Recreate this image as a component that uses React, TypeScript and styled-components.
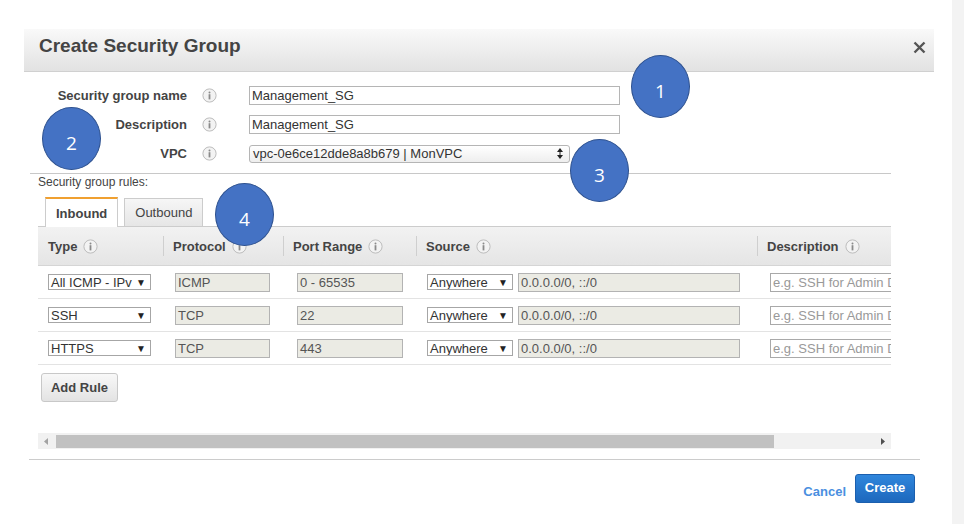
import styled, { createGlobalStyle } from "styled-components";

const GlobalStyle = createGlobalStyle`
  html, body {
    margin: 0;
    padding: 0;
    background: #ffffff;
  }
  body {
    font-family: "Liberation Sans", Arial, sans-serif;
    color: #444444;
  }
`;

const Page = styled.div`
  display: flex;
  width: 964px;
  height: 524px;
  overflow: hidden;
`;

const Stage = styled.div`
  position: relative;
  width: 952px;
  height: 524px;
`;

const SideStrip = styled.div`
  width: 12px;
  background: #f3f3f3;
`;

const Modal = styled.div`
  margin: 29px 0 0 24px;
  width: 910px;
  background: #ffffff;
`;

const Header = styled.div`
  display: flex;
  justify-content: space-between;
  align-items: flex-start;
  height: 43px;
  box-sizing: border-box;
  padding: 5px 8px 0 15px;
  background: linear-gradient(#f9f9f9, #e2e2e2);
  border-bottom: 1px solid #d0d0d0;
`;

const Title = styled.h1`
  margin: 0;
  font-size: 19px;
  line-height: 24px;
  font-weight: bold;
  color: #444444;
`;

const Close = styled.svg`
  margin-top: 7px;
`;

const Body = styled.div`
  padding: 0 43px 0 14px;
`;

const Form = styled.div`
  display: flex;
  flex-direction: column;
  gap: 10px;
  padding-top: 14px;
`;

const FormRow = styled.div`
  display: flex;
  align-items: center;
  height: 19px;
`;

const Label = styled.div`
  width: 149px;
  text-align: right;
  font-size: 13px;
  font-weight: bold;
  color: #444444;
`;

const FormIcon = styled.div`
  display: flex;
  margin-left: 15px;
  width: 15px;
`;

const TextInput = styled.div<{ $w: number }>`
  margin-left: 32px;
  width: ${(p) => p.$w}px;
  height: 19px;
  box-sizing: border-box;
  border: 1px solid #b5b5b5;
  padding: 0 2px;
  font-size: 13px;
  line-height: 17px;
  color: #333333;
  background: #ffffff;
`;

const VpcSelect = styled.div`
  margin-left: 32px;
  width: 321px;
  height: 18px;
  box-sizing: border-box;
  border: 1px solid #b5b5b5;
  border-radius: 3px;
  padding: 0 6px 0 3px;
  display: flex;
  align-items: center;
  justify-content: space-between;
  font-size: 13px;
  color: #333333;
  background: linear-gradient(#ffffff, #eeeeee);
`;

const Divider = styled.div`
  margin: 10px 0 0 -8px;
  height: 1px;
  background: #c8c8c8;
`;

const RulesLabel = styled.div`
  margin-top: 1px;
  font-size: 12px;
  line-height: 14px;
  color: #444444;
`;

const Tabs = styled.div`
  display: flex;
  align-items: flex-end;
  gap: 6px;
  margin-top: 8px;
  padding-left: 7px;
`;

const Tab = styled.div<{ $active?: boolean }>`
  box-sizing: border-box;
  height: ${(p) => (p.$active ? 30 : 28)}px;
  padding: 0 10px;
  display: flex;
  align-items: center;
  font-size: 13px;
  font-weight: ${(p) => (p.$active ? "bold" : "normal")};
  color: #444444;
  border: 1px solid #cccccc;
  border-bottom: none;
  border-top: ${(p) => (p.$active ? "2px solid #f0a030" : "1px solid #cccccc")};
  background: ${(p) =>
    p.$active ? "#ffffff" : "linear-gradient(#f6f6f6, #e6e6e6)"};
  margin-bottom: ${(p) => (p.$active ? "-1px" : "0")};
  position: relative;
`;

const Table = styled.div`
  width: 853px;
  overflow: hidden;
  border-top: 1px solid #cccccc;
`;

const Grid = styled.div`
  display: grid;
  grid-template-columns: 125px 120px 133px 341px 134px;
`;

const HeadRow = styled(Grid)`
  height: 38px;
  background: linear-gradient(#f2f2f2, #e5e5e5);
  border-bottom: 1px solid #d5d5d5;
`;

const HeadCell = styled.div<{ $sep?: boolean }>`
  position: relative;
  display: flex;
  align-items: center;
  gap: 6px;
  padding-left: 10px;
  font-size: 13px;
  font-weight: bold;
  color: #444444;
  white-space: nowrap;
  &::before {
    content: "";
    display: ${(p) => (p.$sep ? "block" : "none")};
    position: absolute;
    left: 0;
    top: 9px;
    width: 1px;
    height: 20px;
    background: #cfcfcf;
  }
`;

const BodyRow = styled(Grid)`
  height: 33px;
  box-sizing: border-box;
  border-bottom: 1px solid #e3e3e3;
`;

const Cell = styled.div<{ $pad: number }>`
  display: flex;
  align-items: center;
  gap: 5px;
  padding-left: ${(p) => p.$pad}px;
  white-space: nowrap;
`;

const DropDown = styled.div<{ $w: number }>`
  width: ${(p) => p.$w}px;
  height: 16px;
  box-sizing: border-box;
  border: 1px solid #a6a6a6;
  background: #ffffff;
  display: flex;
  align-items: center;
  justify-content: space-between;
  padding: 0 4px 0 2px;
  font-size: 13px;
  color: #333333;
  overflow: hidden;
`;

const Caret = styled.span`
  font-size: 10px;
  color: #222222;
  margin-left: 2px;
`;

const ReadOnly = styled.div<{ $w: number }>`
  width: ${(p) => p.$w}px;
  height: 19px;
  box-sizing: border-box;
  border: 1px solid #b3b3b3;
  background: #ebebe4;
  padding: 0 2px;
  font-size: 13px;
  line-height: 17px;
  color: #555555;
`;

const Placeholder = styled.div`
  flex-shrink: 0;
  width: 160px;
  height: 19px;
  box-sizing: border-box;
  border: 1px solid #a9a9a9;
  background: #ffffff;
  padding: 0 2px;
  font-size: 13px;
  line-height: 17px;
  color: #999999;
`;

const AddRule = styled.button`
  margin: 8px 0 0 3px;
  width: 77px;
  height: 29px;
  border: 1px solid #c8c8c8;
  border-radius: 3px;
  background: linear-gradient(#f8f8f8, #e3e3e3);
  font-family: "Liberation Sans", Arial, sans-serif;
  font-size: 13px;
  font-weight: bold;
  color: #444444;
  padding: 0;
`;

const ScrollTrack = styled.div`
  display: flex;
  align-items: center;
  margin-top: 31px;
  width: 853px;
  height: 16px;
  background: #f1f1f1;
`;

const ScrollArrow = styled.div`
  width: 16px;
  height: 16px;
  display: flex;
  align-items: center;
  justify-content: center;
`;

const ScrollThumb = styled.div`
  margin-left: 2px;
  height: 13px;
  background: #c1c1c1;
`;

const ScrollSpace = styled.div`
  flex: 1;
`;

const Footer = styled.div`
  margin: 10px 14px 0 5px;
  border-top: 1px solid #cccccc;
  display: flex;
  justify-content: flex-end;
  align-items: center;
  gap: 9px;
  padding: 14px 5px 0 0;
`;

const CancelLink = styled.span`
  padding-top: 5px;
  font-size: 13px;
  font-weight: bold;
  color: #4a8fe0;
`;

const CreateButton = styled.button`
  width: 60px;
  height: 29px;
  border: 1px solid #1b5fae;
  border-radius: 3px;
  background: linear-gradient(#2f86dc, #1d68bd);
  font-family: "Liberation Sans", Arial, sans-serif;
  font-size: 13px;
  font-weight: bold;
  color: #ffffff;
  padding: 0 0 3px;
`;

const Marker = styled.div`
  position: absolute;
  width: 59px;
  height: 63px;
  box-sizing: border-box;
  border-radius: 50%;
  border: 1.5px solid #2f528f;
  background: #4472c4;
  color: #ffffff;
  font-family: "Open Sans", "Noto Sans", sans-serif;
  font-size: 19px;
  display: flex;
  align-items: center;
  justify-content: center;
  padding-top: 8px;
`;

function InfoIcon() {
  return (
    <svg width="15" height="15" viewBox="0 0 15 15">
      <circle cx="7.5" cy="7.5" r="6.6" fill="#f3f3f3" stroke="#bcbcbc" strokeWidth="1" />
      <circle cx="7.5" cy="4.4" r="1" fill="#8a8a8a" />
      <rect x="6.6" y="6.2" width="1.8" height="5.2" fill="#8a8a8a" />
    </svg>
  );
}

function SortArrows() {
  return (
    <svg width="6" height="11" viewBox="0 0 6 11">
      <path d="M3 0 L6 4 L0 4 Z" fill="#222" />
      <path d="M3 11 L6 7 L0 7 Z" fill="#222" />
      <rect x="2.5" y="3" width="1" height="5" fill="#222" />
    </svg>
  );
}

const rules = [
  { type: "All ICMP - IPv", protocol: "ICMP", port: "0 - 65535" },
  { type: "SSH", protocol: "TCP", port: "22" },
  { type: "HTTPS", protocol: "TCP", port: "443" },
];

const markers = [
  { n: "1", x: 631, y: 55 },
  { n: "2", x: 42, y: 107 },
  { n: "3", x: 570, y: 139 },
  { n: "4", x: 215, y: 183 },
];

export default function App() {
  return (
    <>
      <GlobalStyle />
      <Page>
        <Stage>
          <Modal>
            <Header>
              <Title>Create Security Group</Title>
              <Close width="13" height="13" viewBox="0 0 13 13">
                <path d="M1.5 1.5 L11.5 11.5 M11.5 1.5 L1.5 11.5" stroke="#555" strokeWidth="2.4" />
              </Close>
            </Header>
            <Body>
              <Form>
                <FormRow>
                  <Label>Security group name</Label>
                  <FormIcon>
                    <InfoIcon />
                  </FormIcon>
                  <TextInput $w={371}>Management_SG</TextInput>
                </FormRow>
                <FormRow>
                  <Label>Description</Label>
                  <FormIcon>
                    <InfoIcon />
                  </FormIcon>
                  <TextInput $w={371}>Management_SG</TextInput>
                </FormRow>
                <FormRow>
                  <Label>VPC</Label>
                  <FormIcon>
                    <InfoIcon />
                  </FormIcon>
                  <VpcSelect>
                    <span>vpc-0e6ce12dde8a8b679 | MonVPC</span>
                    <SortArrows />
                  </VpcSelect>
                </FormRow>
              </Form>
              <Divider />
              <RulesLabel>Security group rules:</RulesLabel>
              <Tabs>
                <Tab $active>Inbound</Tab>
                <Tab>Outbound</Tab>
              </Tabs>
              <Table>
                <HeadRow>
                  <HeadCell>
                    Type <InfoIcon />
                  </HeadCell>
                  <HeadCell $sep>
                    Protocol <InfoIcon />
                  </HeadCell>
                  <HeadCell $sep>
                    Port Range <InfoIcon />
                  </HeadCell>
                  <HeadCell $sep>
                    Source <InfoIcon />
                  </HeadCell>
                  <HeadCell $sep>
                    Description <InfoIcon />
                  </HeadCell>
                </HeadRow>
                {rules.map((r) => (
                  <BodyRow key={r.type}>
                    <Cell $pad={10}>
                      <DropDown $w={103}>
                        <span>{r.type}</span>
                        <Caret>▼</Caret>
                      </DropDown>
                    </Cell>
                    <Cell $pad={12}>
                      <ReadOnly $w={95}>{r.protocol}</ReadOnly>
                    </Cell>
                    <Cell $pad={14}>
                      <ReadOnly $w={106}>{r.port}</ReadOnly>
                    </Cell>
                    <Cell $pad={11}>
                      <DropDown $w={86}>
                        <span>Anywhere</span>
                        <Caret>▼</Caret>
                      </DropDown>
                      <ReadOnly $w={222}>0.0.0.0/0, ::/0</ReadOnly>
                    </Cell>
                    <Cell $pad={13}>
                      <Placeholder>e.g. SSH for Admin Desktop</Placeholder>
                    </Cell>
                  </BodyRow>
                ))}
              </Table>
              <AddRule>Add Rule</AddRule>
              <ScrollTrack>
                <ScrollArrow>
                  <svg width="4" height="7" viewBox="0 0 4 7">
                    <path d="M4 0 L0 3.5 L4 7 Z" fill="#a3a3a3" />
                  </svg>
                </ScrollArrow>
                <ScrollThumb style={{ width: 718 }} />
                <ScrollSpace />
                <ScrollArrow>
                  <svg width="4" height="7" viewBox="0 0 4 7">
                    <path d="M0 0 L4 3.5 L0 7 Z" fill="#505050" />
                  </svg>
                </ScrollArrow>
              </ScrollTrack>
            </Body>
            <Footer>
              <CancelLink>Cancel</CancelLink>
              <CreateButton>Create</CreateButton>
            </Footer>
          </Modal>
          {markers.map((m) => (
            <Marker key={m.n} style={{ left: m.x, top: m.y }}>
              {m.n}
            </Marker>
          ))}
        </Stage>
        <SideStrip />
      </Page>
    </>
  );
}
